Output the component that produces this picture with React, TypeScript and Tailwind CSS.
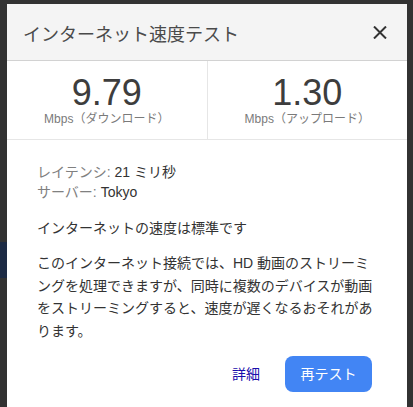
import React from "react";

const FONT = { fontFamily: '"Liberation Sans", Arial, "Noto Sans CJK JP", sans-serif' };

function Stat({ value, label }: { value: string; label: string }) {
  return (
    <div className="flex-1 flex flex-col items-center pt-[14px]">
      <div className="text-[36px] leading-[36px] text-[#3d3d3d]">{value}</div>
      <div className="text-[12px] leading-[14px] text-[#7a7a7a] mt-[1px]">{label}</div>
    </div>
  );
}

export default function App() {
  return (
    <div className="relative w-[413px] h-[407px] overflow-hidden bg-[#323232]" style={FONT}>
      {/* dimmed page content behind the dialog */}
      <div className="flex flex-col w-[7px] h-full">
        <div className="h-[242px]" />
        <div className="h-[36px] bg-[#1c2a44]" />
      </div>

      {/* dialog */}
      <div className="absolute left-[7px] top-[4px] w-[400px] h-[420px] bg-white flex flex-col">
        <div className="h-[57px] bg-[#f4f4f4] border-b border-[#d2d2d2] flex items-start pl-[16px] pr-[20px]">
          <div className="flex-1 pt-[20px] text-[18px] leading-[22px] text-[#4a4a4a]">
            インターネット速度テスト
          </div>
          <svg className="mt-[22px]" width="14" height="13" viewBox="0 0 14 13">
            <path d="M1 0.5 L13 12.5 M13 0.5 L1 12.5" stroke="#333" strokeWidth="2" fill="none" />
          </svg>
        </div>

        <div className="h-[79px] border-b border-[#e6e6e6] flex">
          <Stat value="9.79" label="Mbps（ダウンロード）" />
          <div className="w-px bg-[#e6e6e6]" />
          <Stat value="1.30" label="Mbps（アップロード）" />
        </div>

        <div className="pl-[30px] pr-[30px] pt-[22px] text-[14px] text-[#333]">
          <div className="leading-[20px]">
            <span className="text-[#808080]">レイテンシ: </span>21 ミリ秒
          </div>
          <div className="leading-[20px]">
            <span className="text-[#808080]">サーバー: </span>Tokyo
          </div>
          <div className="leading-[22.5px] mt-[15px]">インターネットの速度は標準です</div>
          <div className="leading-[22.5px] mt-[12.5px]">
            このインターネット接続では、HD 動画のストリーミングを処理できますが、同時に複数のデバイスが動画をストリーミングすると、速度が遅くなるおそれがあります。
          </div>
        </div>

        <div className="flex items-center justify-end pr-[35px] mt-[14px] gap-[25px]">
          <span className="text-[14px] text-[#1a0dab]">詳細</span>
          <div className="w-[87px] h-[36px] rounded-[8px] bg-[#4285f4] flex items-center justify-center text-white text-[14px]">
            再テスト
          </div>
        </div>
      </div>
    </div>
  );
}
